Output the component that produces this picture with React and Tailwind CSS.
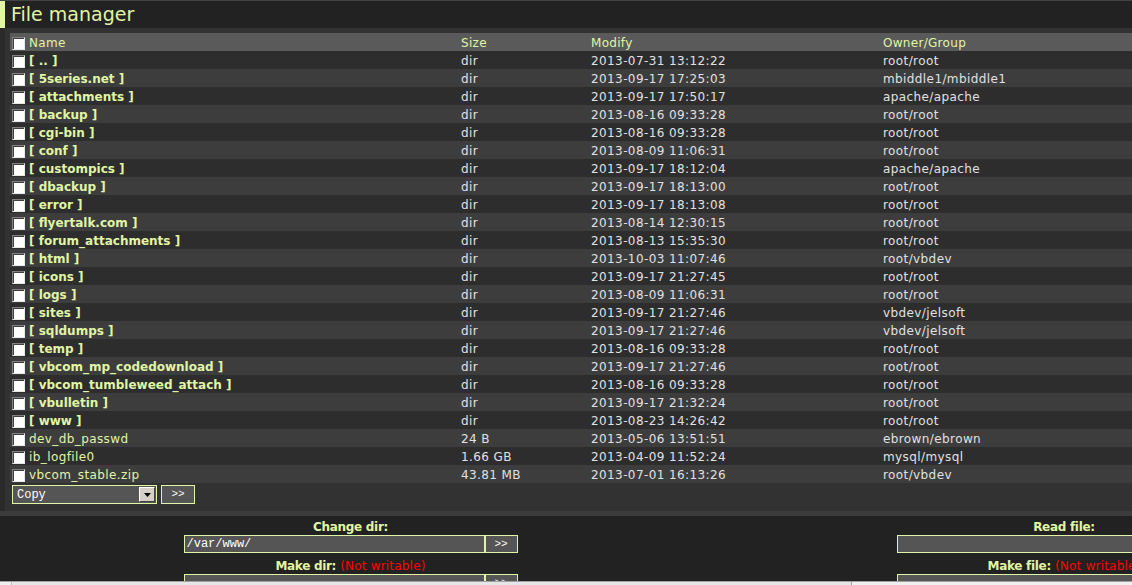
const green = "text-[#e0f5a5]";

const rows = [
  { name: "..", dir: true, size: "dir", mod: "2013-07-31 13:12:22", own: "root/root" },
  { name: "5series.net", dir: true, size: "dir", mod: "2013-09-17 17:25:03", own: "mbiddle1/mbiddle1" },
  { name: "attachments", dir: true, size: "dir", mod: "2013-09-17 17:50:17", own: "apache/apache" },
  { name: "backup", dir: true, size: "dir", mod: "2013-08-16 09:33:28", own: "root/root" },
  { name: "cgi-bin", dir: true, size: "dir", mod: "2013-08-16 09:33:28", own: "root/root" },
  { name: "conf", dir: true, size: "dir", mod: "2013-08-09 11:06:31", own: "root/root" },
  { name: "custompics", dir: true, size: "dir", mod: "2013-09-17 18:12:04", own: "apache/apache" },
  { name: "dbackup", dir: true, size: "dir", mod: "2013-09-17 18:13:00", own: "root/root" },
  { name: "error", dir: true, size: "dir", mod: "2013-09-17 18:13:08", own: "root/root" },
  { name: "flyertalk.com", dir: true, size: "dir", mod: "2013-08-14 12:30:15", own: "root/root" },
  { name: "forum_attachments", dir: true, size: "dir", mod: "2013-08-13 15:35:30", own: "root/root" },
  { name: "html", dir: true, size: "dir", mod: "2013-10-03 11:07:46", own: "root/vbdev" },
  { name: "icons", dir: true, size: "dir", mod: "2013-09-17 21:27:45", own: "root/root" },
  { name: "logs", dir: true, size: "dir", mod: "2013-08-09 11:06:31", own: "root/root" },
  { name: "sites", dir: true, size: "dir", mod: "2013-09-17 21:27:46", own: "vbdev/jelsoft" },
  { name: "sqldumps", dir: true, size: "dir", mod: "2013-09-17 21:27:46", own: "vbdev/jelsoft" },
  { name: "temp", dir: true, size: "dir", mod: "2013-08-16 09:33:28", own: "root/root" },
  { name: "vbcom_mp_codedownload", dir: true, size: "dir", mod: "2013-09-17 21:27:46", own: "root/root" },
  { name: "vbcom_tumbleweed_attach", dir: true, size: "dir", mod: "2013-08-16 09:33:28", own: "root/root" },
  { name: "vbulletin", dir: true, size: "dir", mod: "2013-09-17 21:32:24", own: "root/root" },
  { name: "www", dir: true, size: "dir", mod: "2013-08-23 14:26:42", own: "root/root" },
  { name: "dev_db_passwd", dir: false, size: "24 B", mod: "2013-05-06 13:51:51", own: "ebrown/ebrown" },
  { name: "ib_logfile0", dir: false, size: "1.66 GB", mod: "2013-04-09 11:52:24", own: "mysql/mysql" },
  { name: "vbcom_stable.zip", dir: false, size: "43.81 MB", mod: "2013-07-01 16:13:26", own: "root/vbdev" },
];

// only the visible part of the listing; the table runs past the window
const cols = "grid grid-cols-[449px_130px_292px_500px]";

function Check() {
  return (
    <span className="inline-block w-[13px] h-[13px] shrink-0 bg-white border border-t-[#808080] border-l-[#808080] border-b-[#e8e8e8] border-r-[#e8e8e8] shadow-[inset_1px_1px_0_#404040]" />
  );
}

function Row({ r, i }) {
  return (
    <div className={`${cols} h-[18px] leading-[20px] ${i % 2 === 0 ? "bg-[#2d2d2d]" : "bg-[#3d3d3d]"}`}>
      <div className="flex items-center pl-[2px] gap-[4px]">
        <Check />
        {r.dir ? (
          <span className={`${green} font-bold`}>[ {r.name} ]</span>
        ) : (
          <span className={`${green} tracking-[0.4px]`}>{r.name}</span>
        )}
      </div>
      <div className="pl-[2px] tracking-[0.4px]">{r.size}</div>
      <div className="pl-[2px] tracking-[0.4px]">{r.mod}</div>
      <div className="pl-[2px] tracking-[0.4px]">{r.own}</div>
    </div>
  );
}

function ToolField({ label, note, value }) {
  return (
    <div className="flex flex-col items-center">
      <div className={`${green} font-bold text-[12px] leading-[15px] tracking-[-0.3px] whitespace-nowrap`}>
        {label}
        {note && <span className="text-[#ff0000] font-normal tracking-[0.2px]"> {note}</span>}
      </div>
      <div className="flex">
        <div className="w-[301px] h-[18px] bg-[#555] border border-[#e0f5a5] text-white font-['Liberation_Mono',monospace] text-[12px] leading-[16px] pl-[2px]">
          {value}
        </div>
        <div className="w-[33px] h-[18px] bg-[#555] border border-[#e0f5a5] text-white font-['Liberation_Mono',monospace] text-[11px] leading-[16px] text-center">
          &gt;&gt;
        </div>
      </div>
    </div>
  );
}

export default function App() {
  return (
    <div className="w-[1132px] h-[585px] overflow-hidden flex flex-col bg-[#2a2a2a] text-[#e1e1e1] font-['DejaVu_Sans',sans-serif] text-[12px]">
      <div className="flex-1 min-h-0 overflow-hidden">
        <div className="w-[1427px]">
          <div className="h-px bg-[#444]" />
          <div className={`h-[27px] bg-[#222] border-l-[5px] border-[#e0f5a5] pl-[6px] text-[19px] leading-[27px] ${green}`}>
            File manager
          </div>
          <div className="ml-[5px] p-[5px] bg-[#323232]">
            <div className={`${cols} h-[18px] leading-[20px] bg-[#5a5a5a] ${green}`}>
              <div className="flex items-center pl-[2px] gap-[4px]">
                <Check />
                <span className="tracking-[0.3px]">Name</span>
              </div>
              <div className="pl-[2px] tracking-[0.3px]">Size</div>
              <div className="pl-[2px] tracking-[0.3px]">Modify</div>
              <div className="pl-[2px] tracking-[0.3px]">Owner/Group</div>
            </div>
            {rows.map((r, i) => (
              <Row key={r.name} r={r} i={i} />
            ))}
            <div className="flex gap-[4px] pt-[2px] pl-[2px] h-[23px]">
              <div className="w-[145px] h-[19px] bg-[#555] border border-[#e0f5a5] flex items-center justify-between pl-[4px] pr-[1px]">
                <span className="text-white font-['Liberation_Mono',monospace] text-[12px]">Copy</span>
                <span className="w-[16px] h-[15px] bg-[#d4d0c8] border border-t-white border-l-white border-b-[#404040] border-r-[#404040] flex items-center justify-center">
                  <svg width="7" height="4" viewBox="0 0 7 4">
                    <path d="M0 0h7L3.5 4z" fill="#000" />
                  </svg>
                </span>
              </div>
              <div className="w-[34px] h-[19px] bg-[#555] border border-[#e0f5a5] text-white font-['Liberation_Mono',monospace] text-[11px] leading-[17px] text-center">
                &gt;&gt;
              </div>
            </div>
          </div>
          <div className="h-[5px] bg-[#3c3c3c]" />
          <div className="bg-[#222] flex">
            <div className="w-[701px] flex flex-col">
              <div className="pt-[4px] pb-[3px]">
                <ToolField label="Change dir:" value="/var/www/" />
              </div>
              <div className="pt-[3px] pb-[3px]">
                <ToolField label="Make dir:" note="(Not writable)" value="" />
              </div>
            </div>
            <div className="w-[726px] flex flex-col">
              <div className="pt-[4px] pb-[3px]">
                <ToolField label="Read file:" value="" />
              </div>
              <div className="pt-[3px] pb-[3px]">
                <ToolField label="Make file:" note="(Not writable)" value="" />
              </div>
            </div>
          </div>
        </div>
      </div>
      <div className="h-[4px] shrink-0 bg-[#f0f0f0] border-t border-[#a0a0a0] flex">
        <div className="w-[12px] border-r border-[#c0c0c0]" />
        <div className="w-[840px] bg-[#e6e6e6] border-r border-[#a0a0a0]" />
      </div>
    </div>
  );
}
